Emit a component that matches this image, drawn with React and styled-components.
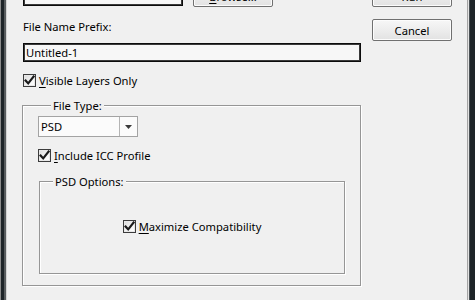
import React from 'react';
import styled, { createGlobalStyle } from 'styled-components';

const GlobalStyle = createGlobalStyle`
  html, body { margin: 0; padding: 0; background: #f0f0f0; }
  body { font-family: "Noto Sans", "Open Sans", sans-serif; font-size: 11.2px; color: #000; }
  * { box-sizing: border-box; }
`;

const Window = styled.div`
  display: flex;
  width: 475px;
  height: 300px;
  overflow: hidden;
  background: #f0f0f0;
`;

const LeftFrame = styled.div`
  flex: none;
  width: 7px;
  background: linear-gradient(to right,
    #8c8c8c 0 1px, #1e2428 1px 4px, #585c5e 4px 6px, #d4d4d4 6px 7px);
`;

const RightFrame = styled.div`
  flex: none;
  width: 8px;
  margin-left: auto;
  background: linear-gradient(to right,
    #a4a4a4 0 1px, #e2e2e2 1px 2px, #4a5054 2px 3px, #1e2428 3px 8px);
`;

const Body = styled.div`
  display: flex;
  align-items: flex-start;
  margin-top: -16px;
  padding-left: 15px;
  gap: 11px;
`;

const MainColumn = styled.div`
  display: flex;
  flex-direction: column;
  width: 339px;
`;

const ButtonColumn = styled.div`
  display: flex;
  flex-direction: column;
  gap: 12px;
  width: 80px;
`;

const TopRow = styled.div`
  display: flex;
  align-items: flex-start;
  gap: 10px;
  padding-left: 1px;
`;

const TextBox = styled.div`
  width: ${p => p.$w}px;
  height: ${p => p.$h}px;
  border: 1px solid #0c0c0c;
  box-shadow: inset 0 0 0 1px #3a3a3a;
  background: #f7f7f7;
  padding-left: 2px;
  display: flex;
  align-items: center;
  line-height: 15px;
  white-space: nowrap;
`;

const Button = styled.div`
  width: 80px;
  height: ${p => p.$h}px;
  border: 1px solid #707070;
  border-radius: 2px;
  background: linear-gradient(#f7f7f7, #ececec 55%, #e2e2e2);
  box-shadow: inset 0 0 0 1px #fcfcfc;
  display: flex;
  align-items: center;
  justify-content: center;
  line-height: 15px;
  padding-top: ${p => p.$pt || 0}px;
`;

const Label = styled.div`
  margin-top: ${p => p.$mt}px;
  padding-left: 1px;
  line-height: 15px;
`;

const Key = styled.span`
  text-decoration: underline;
  text-underline-offset: 2px;
  text-decoration-thickness: 1px;
`;

const CheckRow = styled.label`
  display: flex;
  align-items: center;
  justify-content: ${p => (p.$center ? 'center' : 'flex-start')};
  gap: 3px;
  height: 15px;
  line-height: 15px;
  margin-top: ${p => p.$mt}px;
  padding-left: ${p => p.$pl || 0}px;
  white-space: nowrap;
`;

const Box = styled.span`
  flex: none;
  width: 13px;
  height: 13px;
  border: 1px solid #3c3c3c;
  background: linear-gradient(135deg, #d9d9d9, #f6f6f6 60%, #ffffff);
  box-shadow: inset 0 0 0 1px #e8e8e8;
  display: flex;
  align-items: center;
  justify-content: center;
`;

const Group = styled.fieldset`
  margin: ${p => p.$mt}px 0 0 ${p => p.$ml || 0}px;
  padding: 0 0 ${p => p.$pb}px ${p => p.$pl || 0}px;
  width: ${p => p.$w}px;
  border: 1px solid #969696;
  box-shadow: inset 1px 1px 0 #ffffff, 1px 1px 0 #ffffff;
  min-width: 0;
  display: flex;
  flex-direction: column;
`;

const Legend = styled.legend`
  margin-left: 13px;
  padding: 0 2px;
  line-height: 15px;
  background: #f0f0f0;
`;

const Select = styled.div`
  display: flex;
  width: 100px;
  height: 21px;
  margin-top: 3px;
  border: 1px solid #a3a3a3;
  background: #fbfbfb;
`;

const SelectValue = styled.div`
  flex: 1;
  padding-left: 2px;
  display: flex;
  align-items: center;
  line-height: 15px;
`;

const SelectArrow = styled.div`
  flex: none;
  width: 18px;
  border-left: 1px solid #b4b4b4;
  display: flex;
  align-items: center;
  justify-content: center;
`;

const Check = () => (
  <Box>
    <svg width="11" height="11" viewBox="0 0 11 11">
      <path d="M1.6 5.6 L4.2 8.4 L9.6 1.6" fill="none" stroke="#1a1a1a" strokeWidth="2.2" strokeLinecap="square" />
    </svg>
  </Box>
);

export default function App() {
  return (
    <>
      <GlobalStyle />
      <Window>
        <LeftFrame />
        <Body>
          <MainColumn>
            <TopRow>
              <TextBox $w={160} $h={22} />
              <Button $h={23} $pt={2}><span><Key>B</Key>rowse...</span></Button>
            </TopRow>
            <Label $mt={12}>File Name Prefix:</Label>
            <TextBox as="div" $w={338} $h={19} style={{ marginTop: 9, marginLeft: 1 }}>Untitled-1</TextBox>
            <CheckRow $mt={11} $pl={1}>
              <Check />
              <span><Key>V</Key>isible Layers Only</span>
            </CheckRow>
            <Group $mt={10} $pb={11} $pl={15} $w={339}>
              <Legend>File Type:</Legend>
              <Select>
                <SelectValue>PSD</SelectValue>
                <SelectArrow>
                  <svg width="7" height="4" viewBox="0 0 7 4">
                    <path d="M0 0 H7 L3.5 4 Z" fill="#3a3a3a" />
                  </svg>
                </SelectArrow>
              </Select>
              <CheckRow $mt={11}>
                <Check />
                <span><Key>I</Key>nclude ICC Profile</span>
              </CheckRow>
              <Group $mt={11} $ml={1} $pb={39} $w={306}>
                <Legend>PSD Options:</Legend>
                <CheckRow $mt={30} $center>
                  <Check />
                  <span><Key>M</Key>aximize Compatibility</span>
                </CheckRow>
              </Group>
            </Group>
          </MainColumn>
          <ButtonColumn>
            <Button $h={23} $pt={2}>Run</Button>
            <Button $h={22}>Cancel</Button>
          </ButtonColumn>
        </Body>
        <RightFrame />
      </Window>
    </>
  );
}
